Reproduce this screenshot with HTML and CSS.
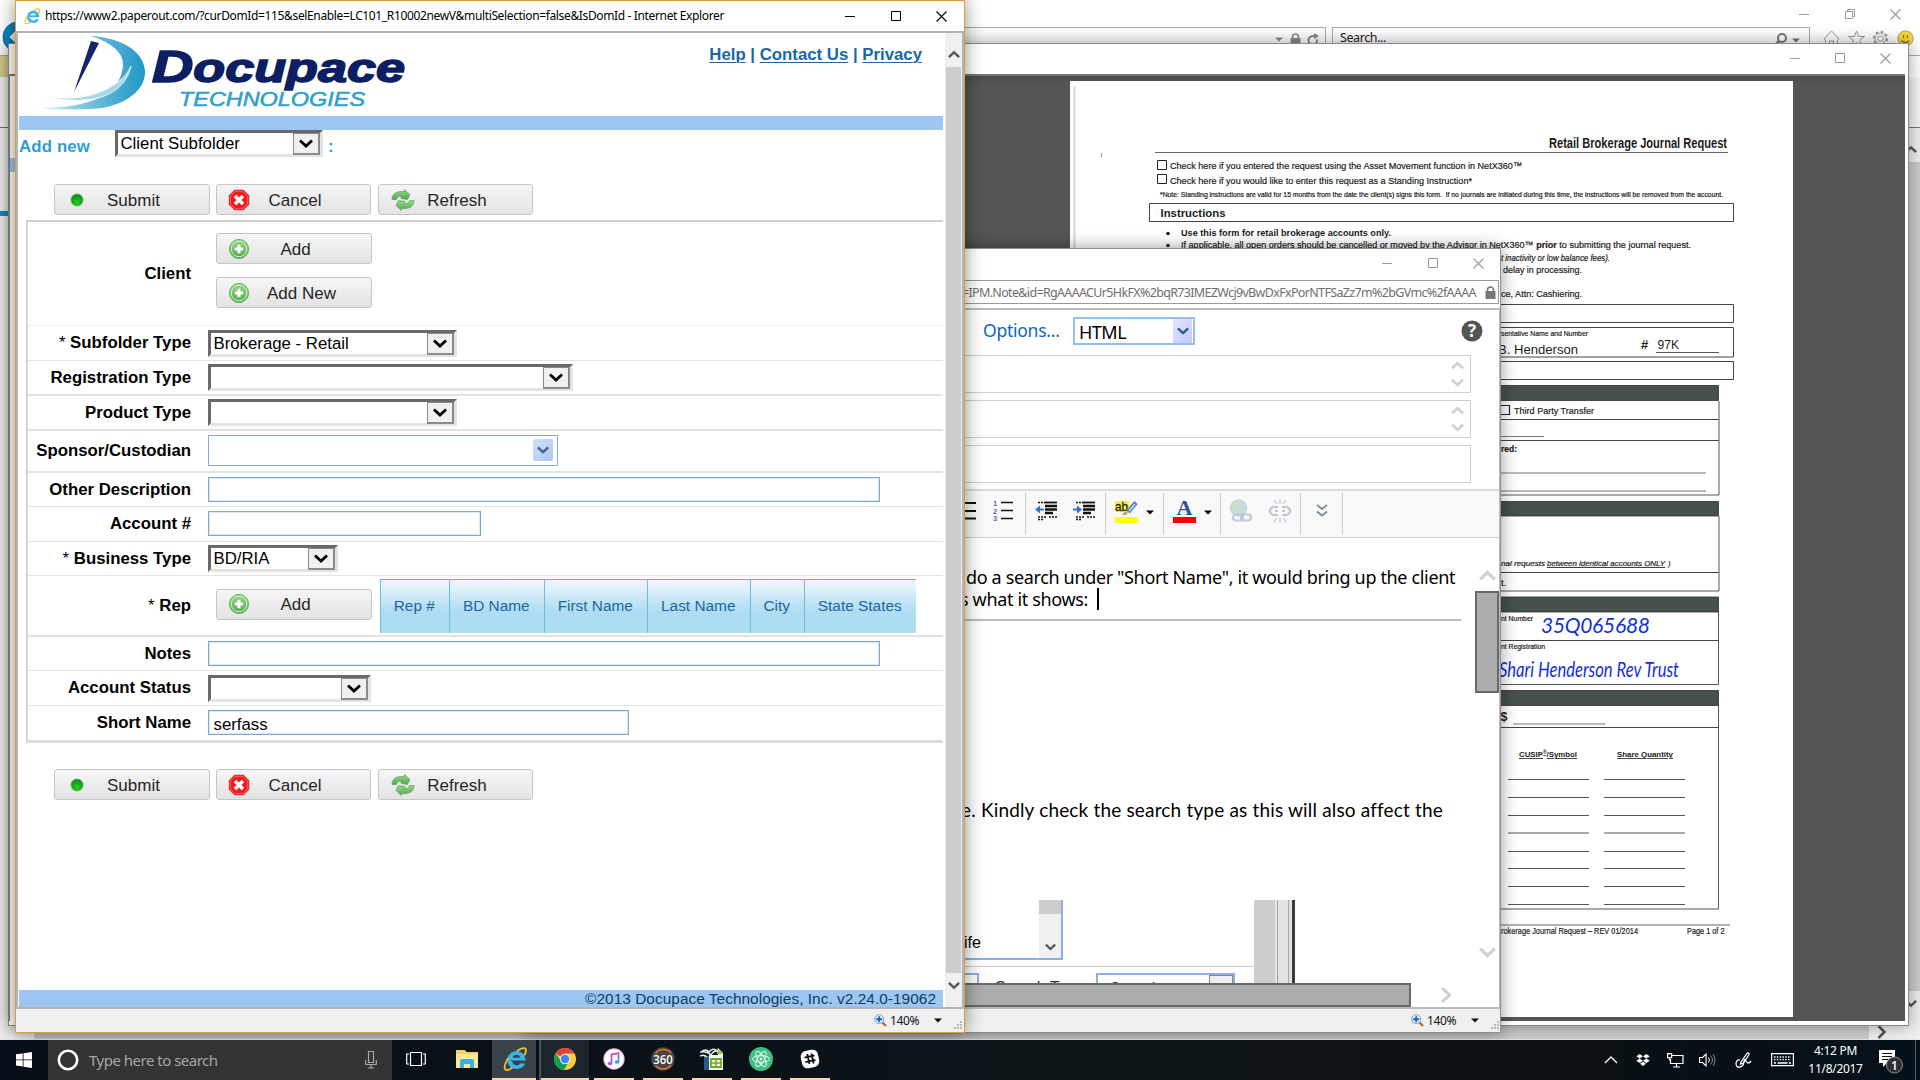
FILE: index.html
```html
<!DOCTYPE html>
<html lang="en">
<head>
<meta charset="utf-8">
<title>Docupace - Add new client subfolder</title>
<link rel="stylesheet" href="styles.css">
</head>
<body>
<svg class="defs" width="0" height="0" aria-hidden="true">
  <defs>
    <linearGradient id="gSwoosh" x1="0" x2="1"><stop offset="0" stop-color="#fff"/><stop offset=".45" stop-color="#7fc4df"/><stop offset="1" stop-color="#1f97c6"/></linearGradient>
    <linearGradient id="gGreen" x1="0" y1="0" x2="0" y2="1"><stop offset="0" stop-color="#9bd88c"/><stop offset="1" stop-color="#4fa84c"/></linearGradient>
    <radialGradient id="gDot" cx=".5" cy=".7" r=".6"><stop offset="0" stop-color="#22d31c"/><stop offset="1" stop-color="#128a22"/></radialGradient>
    <radialGradient id="gTunes" cx=".5" cy=".5" r=".5"><stop offset=".8" stop-color="#fff"/><stop offset="1" stop-color="#e9a8d6"/></radialGradient>
    <linearGradient id="gNote" x1="0" y1="0" x2="1" y2="1"><stop offset="0" stop-color="#f8406a"/><stop offset=".5" stop-color="#b455e0"/><stop offset="1" stop-color="#28a8f0"/></linearGradient>
    <symbol id="min" viewBox="0 0 11 11"><path d="M0 5.5h10" stroke="currentColor" fill="none"/></symbol>
    <symbol id="max" viewBox="0 0 11 11"><path d="M.5 .5h9v9h-9z" stroke="currentColor" fill="none"/></symbol>
    <symbol id="restore" viewBox="0 0 11 11"><path d="M.5 2.5h7v7h-7zM2.5 2.500v-2h7v7h-2" stroke="currentColor" fill="none"/></symbol>
    <symbol id="close" viewBox="0 0 11 11"><path d="M.5 .5l10 10M10.500 .5l-10 10" stroke="currentColor" fill="none" stroke-width="1.1"/></symbol>
    <symbol id="down" viewBox="0 0 14 9"><path d="M1 1.500l6 5.500 6-5.500" stroke="currentColor" stroke-width="2.800" fill="none"/></symbol>
    <symbol id="up" viewBox="0 0 14 9"><path d="M1 7.500l6-5.500 6 5.500" stroke="currentColor" stroke-width="2.800" fill="none"/></symbol>
    <symbol id="caret" viewBox="0 0 8 5"><path d="M0 .5h8l-4 4z" fill="currentColor"/></symbol>
    <symbol id="lock" viewBox="0 0 11 13"><path d="M.5 5h10v8h-10z" fill="currentColor"/><path d="M2.500 6V4a3 3 0 0 1 6 0v2" stroke="currentColor" stroke-width="1.600" fill="none"/></symbol>
    <symbol id="ie" viewBox="0 0 24 24"><path d="M6 13h15.500c.3-5.200-3.300-9-8.500-9-5 0-8.600 3.700-8.600 8.600 0 5 3.600 8.400 8.700 8.400 3.900 0 6.800-2 8-5.200h-4.700c-.7 1.200-1.800 1.800-3.300 1.800-2.300 0-3.900-1.400-4.100-3.600zM9.200 10.200c.4-1.800 1.800-2.800 3.800-2.800s3.300 1 3.600 2.800z" fill="#37b6ee"/><path d="M20.500 8c1.800-3.300 2.200-6 .5-6.700-1.600-.6-4.500.5-7.600 2.700M5.200 10.500C2 15.500.6 20.200 2.500 21.800c1.200.9 3.800.1 6.500-1.800" stroke="#f2c230" stroke-width="1.700" fill="none"/></symbol>
    <symbol id="plus" viewBox="0 0 22 22"><circle cx="11" cy="11" r="9.600" fill="url(#gGreen)" stroke="#6bb765"/><circle cx="11" cy="11" r="7.800" fill="none" stroke="#d8f1d1" stroke-width="1"/><path d="M11 6.800v8.400M6.800 11h8.400" stroke="#fff" stroke-width="3"/></symbol>
    <symbol id="stop" viewBox="0 0 22 22"><path d="M6.500 .8h9l5.700 5.700v9l-5.700 5.700h-9L.8 15.500v-9z" fill="#ee1d23"/><path d="M7.100 2.300h7.800l4.800 4.800v7.800l-4.800 4.800H7.100l-4.800-4.800V7.100z" fill="none" stroke="#ff6e6e" stroke-width=".9"/><path d="M7 7l8 8M15 7l-8 8" stroke="#fff" stroke-width="3.400"/></symbol>
    <symbol id="dot" viewBox="0 0 14 14"><circle cx="7" cy="7" r="6.200" fill="url(#gDot)" stroke="#8fd58f" stroke-width=".7"/></symbol>
    <symbol id="refresh" viewBox="0 0 24 22"><g fill="url(#gGreen)" stroke="#5aa357" stroke-width=".7"><path d="M1 10.500C1 4.500 6 1.600 13.500 2.600V.5L19 5.500l-2.500 5-6.500-1V7.300C8 7.200 6 8 5.500 10.500z"/><path d="M23 11.500c0 6-5 8.900-12.500 7.900v2.100L5 16.500l2.500-5 6.500 1v2.200c2 .1 4-.7 4.500-3.200z"/></g></symbol>
    <symbol id="zoomin" viewBox="0 0 13 13"><path d="M8 8l4 4" stroke="#a8672c" stroke-width="2.200"/><circle cx="5.200" cy="5.200" r="4.500" fill="#e8f3ff" stroke="#8a9bb5"/><path d="M5.200 2.200v6M2.200 5.200h6" stroke="#1463c4" stroke-width="1.900"/></symbol>
    <symbol id="grip" viewBox="0 0 9 9"><path d="M6 0h2v2h-2zM6 3h2v2h-2zM6 6h2v2h-2zM3 3h2v2h-2zM3 6h2v2h-2zM0 6h2v2h-2z" fill="#b8b8b8"/></symbol>
  </defs>
</svg>

<main class="desktop">

  <!-- Main browser window -->
  <section class="win base">
    <div class="base-title">
      <svg class="wbtn"><use href="#min"/></svg><svg class="wbtn"><use href="#restore"/></svg><svg class="wbtn"><use href="#close"/></svg>
    </div>
    <div class="base-nav">
      <svg class="back" viewBox="0 0 32 32"><circle cx="16" cy="16" r="15" fill="#0a84c8" stroke="#0b6ea8"/><path d="M17 9l-7 7 7 7M10 16h14" stroke="#fff" stroke-width="3.500" fill="none"/></svg>
      <div class="addr">
        <svg class="i-caret"><use href="#caret"/></svg><svg class="i-lock"><use href="#lock"/></svg>
        <svg class="i-reload" viewBox="0 0 12 13"><path d="M10 6.500A4.300 4.300 0 1 1 6 3h3" stroke="#888" stroke-width="2" fill="none"/><path d="M7 0l5 3-5 3.300z" fill="#888"/></svg>
      </div>
      <div class="searchbox"><span>Search...</span>
        <svg class="i-mag" viewBox="0 0 13 13"><circle cx="8" cy="5" r="4" stroke="#777" stroke-width="2" fill="none"/><path d="M5 8l-5 5" stroke="#777" stroke-width="2.500"/></svg><svg class="i-caret"><use href="#caret"/></svg></div>
      <div class="base-tools">
        <svg viewBox="0 0 17 17"><path d="M1 9l7.500-8L16 9l-1.500 1v7h-4v-6h-4v6h-4v-7z" fill="none" stroke="#999"/></svg>
        <svg viewBox="0 0 17 17"><path d="M8.500 1l2 5.500h6l-4.800 3.700 2 6.300-5.200-3.800-5.200 3.800 2-6.300L.5 6.500h6z" fill="none" stroke="#999"/></svg>
        <svg viewBox="0 0 17 17"><circle cx="8.500" cy="8.500" r="2.800" fill="none" stroke="#999"/><circle cx="8.500" cy="8.500" r="6.700" fill="none" stroke="#999" stroke-width="2" stroke-dasharray="2.600 2.660"/><circle cx="8.500" cy="8.500" r="5.500" fill="none" stroke="#999"/></svg>
        <svg viewBox="0 0 17 17"><circle cx="8.500" cy="8.500" r="7.600" fill="#fbd83a" stroke="#a39a77"/><path d="M6.500 5v3M10.500 5v3M4.500 10.500q4 4 8 0" stroke="#8a6d1b" stroke-width="1.300" fill="none"/></svg>
      </div>
    </div>
    <div class="base-tab"></div>
    <div class="base-menu"></div>
    <div class="base-body">
      <div class="base-page"></div>
      <div class="vscroll"><svg class="arr"><use href="#up"/></svg><i class="thumb"></i><svg class="arr"><use href="#down"/></svg></div>
    </div>
    <div class="base-h"><i class="thumb"></i><svg class="i-right" viewBox="0 0 9 14"><path d="M1.500 1l6 6-6 6" stroke="#555" stroke-width="2.600" fill="none"/></svg></div>
  </section>

  <!-- Scanned form viewer -->
  <section class="win viewer">
    <div class="viewer-title">
      <svg class="wbtn"><use href="#min"/></svg><svg class="wbtn"><use href="#max"/></svg><svg class="wbtn"><use href="#close"/></svg>
    </div>
    <div class="viewer-body">
      <div class="viewer-side"><i></i></div>
      <div class="viewer-pane">
        <svg class="scan" viewBox="1070 81 723 936" font-family="'Liberation Sans', Arial, sans-serif" fill="#1b1b1b">
          <path d="M1074.500 86v931" stroke="#d3d7d9" stroke-width="2"/>
          <path d="M1101.500 153v4" stroke="#999" stroke-width="1"/>
          <text x="1549" y="148" font-size="14.500" font-weight="700" textLength="178" lengthAdjust="spacingAndGlyphs">Retail Brokerage Journal Request</text>
          <path d="M1155 152.500h573" stroke="#666"/>
          <path d="M1157.500 160.500h9v9h-9zM1157.500 174.500h9v9h-9z" fill="none" stroke="#222"/>
          <g stroke="#1b1b1b" stroke-width=".2">
          <text x="1170" y="169" font-size="9.500" textLength="352" lengthAdjust="spacingAndGlyphs">Check here if you entered the request using the Asset Movement function in NetX360™</text>
          <text x="1170" y="184" font-size="9.500" textLength="302" lengthAdjust="spacingAndGlyphs">Check here if you would like to enter this request as a Standing Instruction*</text>
          <text x="1160" y="197" font-size="6.800" textLength="563" lengthAdjust="spacingAndGlyphs">*Note: Standing instructions are valid for 15 months from the date the client(s) signs this form.&#160; If no journals are initiated during this time, the instructions will be removed from the account.</text>
          </g>
          <path d="M1149.500 203.500h584v18h-584z" fill="none" stroke="#444"/>
          <text x="1160.500" y="216.500" font-size="11.500" font-weight="700" textLength="65" lengthAdjust="spacingAndGlyphs">Instructions</text>
          <circle cx="1168" cy="233.500" r="1.800"/><circle cx="1168" cy="245.500" r="1.800"/>
          <text x="1181" y="236" font-size="9.200" font-weight="700" textLength="210" lengthAdjust="spacingAndGlyphs">Use this form for retail brokerage accounts only.</text>
          <g stroke="#1b1b1b" stroke-width=".2">
          <text x="1181" y="248" font-size="9.200" textLength="510" lengthAdjust="spacingAndGlyphs">If applicable, all open orders should be cancelled or moved by the Advisor in NetX360™ <tspan font-weight="700">prior</tspan> to submitting the journal request.</text>
          <text x="1501" y="260.500" font-size="8.500" font-style="italic" textLength="109" lengthAdjust="spacingAndGlyphs">t inactivity or low balance fees).</text>
          <text x="1503" y="273" font-size="9.300" textLength="79" lengthAdjust="spacingAndGlyphs">delay in processing.</text>
          <text x="1501" y="297" font-size="9.300" textLength="81" lengthAdjust="spacingAndGlyphs">ce, Attn: Cashiering.</text>
          </g>
          <path d="M1480 304.500h253.500v18H1480M1480 327.500h253.500v29.500H1480M1480 361.500h253.500v18H1480" fill="none" stroke="#444"/>
          <text x="1501" y="335.500" font-size="7.200" textLength="87" lengthAdjust="spacingAndGlyphs" stroke="#1b1b1b" stroke-width=".2">sentative Name and Number</text>
          <text x="1498" y="354" font-size="13.500" textLength="80" lengthAdjust="spacingAndGlyphs">B. Henderson</text>
          <text x="1641" y="348.500" font-size="13" font-weight="700">#</text>
          <text x="1657.500" y="348.500" font-size="12" textLength="21.500" lengthAdjust="spacingAndGlyphs">97K</text>
          <path d="M1656 352.500h63" stroke="#555"/>
          <g fill="#47504d" stroke="#2b3130" stroke-width=".8"><path d="M1480 385.500h238.500v15H1480zM1480 501.500h238.500v14.500H1480zM1480 597h238.500v15H1480zM1480 690.500h238.500v15H1480z"/></g>
          <path d="M1719 401v94h-240M1719 516v75h-240M1718.500 612v72.500h-240M1718.500 705v204h-240" fill="none" stroke="#555"/>
          <path d="M1480 419.500h239M1480 440.500h239M1480 572.500h239M1480 640.500h239M1480 727.500h239" stroke="#444"/>
          <path d="M1480 436.500h64M1480 473h226M1480 491h226M1513 724h92" stroke="#777"/>
          <path d="M1500.500 405.500h9v9h-9z" fill="none" stroke="#222" stroke-width="1.200"/>
          <g stroke="#1b1b1b" stroke-width=".2">
          <text x="1514" y="414" font-size="9.300" textLength="80" lengthAdjust="spacingAndGlyphs">Third Party Transfer</text>
          <text x="1501" y="452" font-size="9" font-weight="700" textLength="16" lengthAdjust="spacingAndGlyphs">red:</text>
          <text x="1501" y="566" font-size="7.800" font-style="italic" textLength="44" lengthAdjust="spacingAndGlyphs">nal requests</text>
          <text x="1547" y="566" font-size="7.800" font-style="italic" text-decoration="underline" textLength="118" lengthAdjust="spacingAndGlyphs">between identical accounts ONLY</text>
          <text x="1668" y="566" font-size="7.800" font-style="italic">)</text>
          <text x="1501" y="585.500" font-size="9.500">t.</text>
          <text x="1501" y="621" font-size="7.200" textLength="32" lengthAdjust="spacingAndGlyphs">nt Number</text>
          <text x="1501" y="649" font-size="7.200" textLength="44" lengthAdjust="spacingAndGlyphs">nt Registration</text>
          </g>
          <g fill="#1230d8" font-family="Lato, 'Open Sans', sans-serif">
            <text x="1541" y="633" font-size="21" font-style="italic" textLength="109" lengthAdjust="spacing">35Q065688</text>
            <text x="1499" y="677" font-size="21" font-style="italic" textLength="180" lengthAdjust="spacingAndGlyphs">Shari Henderson Rev Trust</text>
          </g>
          <text x="1500.500" y="720.500" font-size="12.500" font-weight="700">$</text>
          <text x="1519" y="757" font-size="7.800" font-weight="700" text-decoration="underline" textLength="58" lengthAdjust="spacingAndGlyphs">CUSIP<tspan font-size="5" dy="-3">®</tspan><tspan dy="3">/Symbol</tspan></text>
          <text x="1617" y="757" font-size="7.800" font-weight="700" text-decoration="underline" textLength="56" lengthAdjust="spacingAndGlyphs">Share Quantity</text>
          <path d="M1508 779.500h81m15 0h81M1508 797.500h81m15 0h81M1508 815.500h81m15 0h81M1508 833h81m15 0h81M1508 851.500h81m15 0h81M1508 868.500h81m15 0h81M1508 886.500h81m15 0h81M1508 904.500h81m15 0h81" fill="none" stroke="#555"/>
          <path d="M1480 925h250" stroke="#666"/>
          <g stroke="#1b1b1b" stroke-width=".2">
          <text x="1501" y="934" font-size="9" textLength="137" lengthAdjust="spacingAndGlyphs">rokerage Journal Request – REV 01/2014</text>
          <text x="1687" y="934" font-size="9" textLength="37.500" lengthAdjust="spacingAndGlyphs">Page 1 of 2</text>
          </g>
        </svg>
      </div>
    </div>
  </section>

  <!-- Mail compose window -->
  <section class="win mail">
    <div class="mail-title">
      <svg class="wbtn"><use href="#min"/></svg><svg class="wbtn"><use href="#max"/></svg><svg class="wbtn"><use href="#close"/></svg>
    </div>
    <div class="mail-addr"><span>=IPM.Note&amp;id=RgAAAACUr5HkFX%2bqR73IMEZWcj9vBwDxFxPorNTFSaZz7m%2bGVmc%2fAAAA</span><svg class="i-lock"><use href="#lock"/></svg></div>
    <div class="mail-view">
      <div class="mail-options">
        <a class="opt">Options...</a>
        <div class="fmt"><span>HTML</span><i><svg class="i-drop"><use href="#down"/></svg></i></div>
        <svg class="help" viewBox="0 0 22 22"><circle cx="11" cy="11" r="10.500" fill="#555"/><text x="11" y="17" text-anchor="middle" font-size="17" font-weight="700" fill="#fff" font-family="Open Sans, sans-serif">?</text></svg>
      </div>
      <div class="mail-fields">
        <div class="mfield"><svg><use href="#up"/></svg><svg><use href="#down"/></svg></div>
        <div class="mfield"><svg><use href="#up"/></svg><svg><use href="#down"/></svg></div>
        <div class="mfield"></div>
      </div>
      <div class="toolbar">
        <div class="tg g1">
          <svg width="24" height="22" viewBox="0 0 24 22"><path d="M11 3h13M11 11h13M11 18.500h13" stroke="#111" stroke-width="1.800"/></svg>
          <svg width="22" height="22" viewBox="0 0 22 22"><path d="M9 2.500h12M9 10.500h12M9 18.500h12" stroke="#111" stroke-width="1.500"/><text font-size="7.500" font-weight="700" fill="#4a6fb5" font-family="Liberation Sans" x="1" y="6">1<tspan x="1" dy="7.500">2</tspan><tspan x="1" dy="7.500">3</tspan></text></svg>
        </div>
        <div class="tg g2">
          <svg width="23" height="22" viewBox="0 0 23 22"><path d="M9 2.500h13" stroke="#111" stroke-width="1.800"/><path d="M10 6h12M10 9.500h12M10 13h8" stroke="#111" stroke-width="2.400"/><path d="M3 2.500h5M3 17h9M3 19.500h6M14 17h8" stroke="#111" stroke-width="1.500" stroke-dasharray="2 1"/><path d="M0 9.500l5-4v3h4v2H5v3z" fill="#3472c8"/></svg>
          <svg width="23" height="22" viewBox="0 0 23 22"><path d="M9 2.500h13" stroke="#111" stroke-width="1.800"/><path d="M10 6h12M10 9.500h12M10 13h8" stroke="#111" stroke-width="2.400"/><path d="M3 2.500h5M3 17h9M3 19.500h6M14 17h8" stroke="#111" stroke-width="1.500" stroke-dasharray="2 1"/><path d="M9 9.500l-5-4v3H0v2h4v3z" fill="#3472c8"/></svg>
        </div>
        <div class="tg g3">
          <svg width="23" height="23" viewBox="0 0 23 23"><path d="M0 1h14v11H0z" fill="#f5f13a"/><text x="0" y="11" font-size="13" textLength="13" lengthAdjust="spacingAndGlyphs" fill="#222" stroke="#222" stroke-width=".3" font-family="Liberation Sans">ab</text><path d="M21 2.500l-8 9.500" stroke="#5f82b3" stroke-width="4.500"/><path d="M20 4l-6 7" stroke="#c5d6ec" stroke-width="1.600"/><path d="M7 15q3-6 6-2l-2 2z" fill="#c9a24a"/><path d="M0 17h23v6H0z" fill="#ff0"/></svg>
          <svg class="i-caret"><use href="#caret"/></svg>
        </div>
        <div class="tg g3">
          <svg width="23" height="23" viewBox="0 0 23 23"><text x="11.500" y="14.500" text-anchor="middle" font-size="22" font-weight="700" fill="#2f4f96" font-family="Liberation Serif">A</text><path d="M0 17h23v6H0z" fill="#f00"/></svg>
          <svg class="i-caret"><use href="#caret"/></svg>
        </div>
        <div class="tg g4">
          <svg width="24" height="24" viewBox="0 0 24 24" opacity=".6"><circle cx="9.500" cy="9" r="8.200" fill="#a9c4e6" stroke="#9eb0c8"/><path d="M3 6q4-6 8-4l1 4-4 2 1 5-3 2-3-4zM14 6l3 4-3 4z" fill="#a6d3a0"/><rect x="4" y="15.500" width="10" height="6" rx="3" fill="none" stroke="#9aa9c2" stroke-width="2.200"/><rect x="12" y="15.500" width="10" height="6" rx="3" fill="none" stroke="#9aa9c2" stroke-width="2.200"/></svg>
          <svg width="22" height="24" viewBox="0 0 22 24"><path d="M9 8H5a3.500 3.500 0 0 0 0 8h4M13 8h4a3.500 3.500 0 0 1 0 8h-4M6 12h3M13 12h3" fill="none" stroke="#bcc3d1" stroke-width="2.200"/><path d="M11 0v5M5 1l3 4M17 1l-3 4M11 24v-5M5 23l3-4M17 23l-3-4" stroke="#bcc3d1" stroke-width="1.200"/></svg>
        </div>
        <div class="tg g5"><svg width="12" height="13" viewBox="0 0 12 13"><path d="M1 1l5 4 5-4M1 7.500l5 4 5-4" stroke="#7d8aa5" stroke-width="1.800" fill="none"/></svg></div>
      </div>
      <div class="mail-main">
        <div class="mail-text">
          <p class="l1">do a search under "Short Name", it would bring up the client</p>
          <p class="l2">s what it shows: <i class="cursor"></i></p>
          <hr>
          <p class="l3"><span>e. </span>Kindly check the search type as this will also affect the</p>
          <div class="shot">
            <div class="shot-main">
              <div class="shot-list"><span>ife</span><div class="shot-scroll"><i></i><svg><use href="#down"/></svg></div></div>
              <div class="shot-row"><i class="shot-in"></i><span>Search Type</span><b><em>Contains</em><i></i></b></div>
            </div>
            <div class="shot-edge"></div>
          </div>
        </div>
        <div class="mail-scroll"><svg class="arr"><use href="#up"/></svg><i class="thumb"></i><svg class="arr"><use href="#down"/></svg></div>
      </div>
      <div class="mail-h"><i class="thumb"></i><svg viewBox="0 0 12 16"><path d="M2 1l7.500 7L2 15" stroke="#cdcdcd" stroke-width="3" fill="none"/></svg></div>
    </div>
    <div class="status"><svg class="i-zoom"><use href="#zoomin"/></svg><span>140%</span><svg class="i-caret"><use href="#caret"/></svg><svg class="i-grip"><use href="#grip"/></svg></div>
  </section>

  <!-- Docupace dialog -->
  <section class="win docu">
    <div class="docu-title">
      <svg class="fav"><use href="#ie"/></svg><span class="ttl">https://www2.paperout.com/?curDomId=115&amp;selEnable=LC101_R10002newV&amp;multiSelection=false&amp;IsDomId - Internet Explorer</span>
      <svg class="wbtn"><use href="#min"/></svg><svg class="wbtn"><use href="#max"/></svg><svg class="wbtn"><use href="#close"/></svg>
    </div>
    <div class="docu-view">
      <div class="page">
        <header class="head">
          <svg class="logo" width="376" height="78" viewBox="32 34 376 78">
            <path d="M90 36C118 37 144 50 145 71c1 22-26 38-57 38-20 1-40 0-56-1 27 0 47-2 62-8 18-7 29-20 29-36C123 51 108 41 90 36z" fill="url(#gSwoosh)"/>
            <path d="M44 96c22 4 42 2 56-4 14-6 26-14 31-26-4 19-20 32-45 34-16 1-32-1-42-4z" fill="#a9d8ea" stroke="#fff" stroke-width=".8"/>
            <path d="M91 41l8 2-25 49z" fill="#14246b"/>
            <text x="152" y="82" font-family="Liberation Sans" font-size="45" font-weight="700" font-style="italic" fill="#0d1f63" stroke="#0d1f63" stroke-width="1.600" textLength="253" lengthAdjust="spacingAndGlyphs"><tspan>D</tspan><tspan font-size="41">ocupace</tspan></text>
            <text x="179" y="105.500" font-family="Liberation Sans" font-size="19.500" font-style="italic" fill="#2f9fcb" stroke="#2f9fcb" stroke-width=".5" textLength="186" lengthAdjust="spacingAndGlyphs">TECHNOLOGIES</text>
          </svg>
          <nav class="links"><a>Help</a> | <a>Contact Us</a> | <a>Privacy</a></nav>
        </header>
        <div class="bluebar"></div>
        <div class="addnew"><b>Add new</b><div class="sel w208"><span>Client Subfolder</span><i><svg><use href="#down"/></svg></i></div><b>:</b></div>
        <div class="btns">
          <div class="btn"><svg width="14" height="14"><use href="#dot"/></svg><span>Submit</span></div>
          <div class="btn"><svg width="22" height="22"><use href="#stop"/></svg><span>Cancel</span></div>
          <div class="btn"><svg class="rf" width="24" height="22"><use href="#refresh"/></svg><span>Refresh</span></div>
        </div>
        <div class="form">
          <div class="row r-client"><label>Client</label><div class="stack"><div class="btn"><svg width="22" height="22"><use href="#plus"/></svg><span>Add</span></div><div class="btn wide"><svg width="22" height="22"><use href="#plus"/></svg><span>Add New</span></div></div></div>
          <div class="row h35"><label><s>*</s> Subfolder Type</label><div class="sel w249"><span>Brokerage - Retail</span><i><svg><use href="#down"/></svg></i></div></div>
          <div class="row h35 b2"><label>Registration Type</label><div class="sel w365"><span></span><i><svg><use href="#down"/></svg></i></div></div>
          <div class="row h35 b2"><label>Product Type</label><div class="sel w249"><span></span><i><svg><use href="#down"/></svg></i></div></div>
          <div class="row h42 b2"><label>Sponsor/Custodian</label><div class="combo"><i><svg><use href="#down"/></svg></i></div></div>
          <div class="row h34"><label>Other Description</label><div class="inp w672"></div></div>
          <div class="row h35"><label>Account #</label><div class="inp w273"></div></div>
          <div class="row h34"><label><s>*</s> Business Type</label><div class="sel w130"><span>BD/RIA</span><i><svg><use href="#down"/></svg></i></div></div>
          <div class="row r-rep b2"><label><s>*</s> Rep</label><div class="btn"><svg width="22" height="22"><use href="#plus"/></svg><span>Add</span></div>
            <div class="cols"><span>Rep #</span><span>BD Name</span><span>First Name</span><span>Last Name</span><span>City</span><span>State States</span></div></div>
          <div class="row h34"><label>Notes</label><div class="inp w672"></div></div>
          <div class="row h35"><label>Account Status</label><div class="sel w163"><span></span><i><svg><use href="#down"/></svg></i></div></div>
          <div class="row h34 last"><label>Short Name</label><div class="inp w421">serfass</div></div>
        </div>
        <div class="btns bottom">
          <div class="btn"><svg width="14" height="14"><use href="#dot"/></svg><span>Submit</span></div>
          <div class="btn"><svg width="22" height="22"><use href="#stop"/></svg><span>Cancel</span></div>
          <div class="btn"><svg class="rf" width="24" height="22"><use href="#refresh"/></svg><span>Refresh</span></div>
        </div>
        <footer class="foot">©2013 Docupace Technologies, Inc. v2.24.0-19062</footer>
      </div>
      <div class="vscroll"><svg class="arr"><use href="#up"/></svg><i class="thumb"></i><svg class="arr"><use href="#down"/></svg></div>
    </div>
    <div class="status"><svg class="i-zoom"><use href="#zoomin"/></svg><span>140%</span><svg class="i-caret"><use href="#caret"/></svg><svg class="i-grip"><use href="#grip"/></svg></div>
  </section>
</main>

<footer class="taskbar">
  <div class="start"><svg width="16" height="16" viewBox="0 0 16 16"><path d="M0 2.300l6.700-.9v6.100H0zM7.500 1.300L16 0v7.500H7.500zM0 8.300h6.700v6.200L0 13.600zM7.500 8.300H16V16l-8.500-1.200z" fill="#fff"/></svg></div>
  <div class="search">
    <svg width="22" height="22" viewBox="0 0 22 22"><circle cx="11" cy="11" r="9.200" fill="none" stroke="#fff" stroke-width="2.600"/></svg>
    <span>Type here to search</span>
    <svg width="12" height="18" viewBox="0 0 12 18"><path d="M3.500 .5h5v11h-5zM.7 9v4.500h10.600V9M6 13.500v3M3 17h6" fill="none" stroke="#a8a8a8" stroke-width="1.200"/></svg>
  </div>
  <div class="app"><svg width="20" height="16" viewBox="0 0 20 16"><path d="M4.500 1.500h11v13h-11zM3 3H.7v10H3M17 3h2.300v10H17" fill="none" stroke="#fff" stroke-width="1.200"/></svg></div>
  <div class="app folder"><svg width="22" height="19" viewBox="0 0 22 19"><path d="M0 0h9l1.500 2H22v16H0z" fill="#f6cf6a"/><path d="M0 4h22v14H0z" fill="#fde695"/><path d="M4 18v-7q0-2 2-2h10q2 0 2 2v7h-4v-4H8v4z" fill="#35b2e8"/></svg></div>
  <div class="app on"><svg width="25" height="25"><use href="#ie"/></svg></div>
  <div class="app on2"><svg width="22" height="22" viewBox="0 0 22 22"><circle cx="11" cy="11" r="11" fill="#ffcd41"/><path d="M11 11L1.500 5.500A11 11 0 0 1 20.500 5.500H11z" fill="#db4437"/><path d="M1.500 5.500A11 11 0 0 0 10 22l5-8.500-8-.5z" fill="#0f9d58"/><circle cx="11" cy="11" r="5.200" fill="#f1f1f1"/><circle cx="11" cy="11" r="4.200" fill="#4285f4"/></svg></div>
  <div class="app run"><svg width="22" height="22" viewBox="0 0 22 22"><circle cx="11" cy="11" r="10.700" fill="url(#gTunes)"/><path d="M8.500 15V6.500l7-1.500v8.500" fill="none" stroke="url(#gNote)" stroke-width="1.800"/><ellipse cx="7" cy="15.500" rx="2.300" ry="1.800" fill="#a45be0"/><ellipse cx="14" cy="14" rx="2.300" ry="1.800" fill="#3a9cf0"/></svg></div>
  <div class="app run"><svg width="24" height="24" viewBox="0 0 24 24"><circle cx="12" cy="12" r="11.800" fill="#454545"/><path d="M4.500 6.500A10 10 0 0 1 20 6M4.500 18.500A10 10 0 0 0 20 18" stroke="#e8702a" stroke-width="1.600" fill="none"/><text x="12" y="16.500" font-family="Open Sans" font-weight="600" font-size="12.500" fill="#fff" text-anchor="middle" textLength="19.500" lengthAdjust="spacingAndGlyphs">360</text></svg></div>
  <div class="app run"><svg width="24" height="24" viewBox="0 0 24 24"><path d="M4 9h5v14H4z" fill="#2a5b86"/><path d="M9 8h9V1l5 5v17H9z" fill="#f3f6ee"/><path d="M17 1l6 6h-6z" fill="#8cc63e"/><path d="M11 12h10v8H11z" fill="#f3f6ee" stroke="#69ad1f" stroke-width="1.800"/><path d="M16 12v8M11 16h10" stroke="#69ad1f" stroke-width="1.500"/><path d="M1 5q5-4 8 0 4-5 8-1-4 0-6 4-4-4-10-3zM0 9q4-2 7 1" fill="none" stroke="#e6edf2" stroke-width="1.500"/></svg></div>
  <div class="app run"><svg width="24" height="24" viewBox="0 0 24 24"><circle cx="12" cy="12" r="12" fill="#3fbf84"/><g fill="none" stroke="#e9fff4" stroke-width="1"><ellipse cx="12" cy="12" rx="8.500" ry="3.300"/><ellipse cx="12" cy="12" rx="8.500" ry="3.300" transform="rotate(60 12 12)"/><ellipse cx="12" cy="12" rx="8.500" ry="3.300" transform="rotate(120 12 12)"/></g><circle cx="12" cy="12" r="1.300" fill="#fff"/></svg></div>
  <div class="app run"><svg width="20" height="20" viewBox="0 0 20 20"><rect x="2" y="2" width="16" height="16" rx="5" fill="#fff" transform="rotate(-12 10 10)" stroke="#fff" stroke-width="1.500"/><path d="M7.200 5l2.300 10M11.400 4.500l2.300 10M4.500 8.600l10-2.300M5.400 13.100l10-2.300" stroke="#111" stroke-width="1.800"/></svg></div>
  <div class="tray">
    <svg width="14" height="8" viewBox="0 0 14 8"><path d="M1 7l6-6 6 6" stroke="#fff" stroke-width="1.300" fill="none"/></svg>
    <svg width="14" height="13" viewBox="0 0 14 13"><path d="M3.700 0L7 2.200 3.700 4.400.3 2.200zM10.300 0l3.400 2.200-3.400 2.200L7 2.200zM3.700 4.600L7 6.800 3.700 9 .3 6.800zM10.300 4.600l3.400 2.200L10.300 9 7 6.800zM7 7.700l3 2-3 2.300-3-2.300z" fill="#fff"/></svg>
    <svg width="17" height="15" viewBox="0 0 17 15"><path d="M5 2.500h11v8H3.500V6M9.500 10.500v3M6 14h7M.6 .6h4v4h-4zM2.500 4.500v3" fill="none" stroke="#fff" stroke-width="1.200"/></svg>
    <svg width="17" height="14" viewBox="0 0 17 14"><path d="M.6 4.500h3l3.500-3.500v12L3.600 9.500h-3z" fill="none" stroke="#fff" stroke-width="1.100"/><path d="M9.500 4.500q2 2.500 0 5" stroke="#fff" fill="none"/><path d="M11.500 2.500q4 4.500 0 9M14 1q4 6 0 12" stroke="#888" fill="none"/></svg>
    <svg width="17" height="16" viewBox="0 0 17 16"><path d="M6 10L12 1.500q2-1.500 2 1L8.500 11 5.500 12zM1 11q1-4 4-3M1 11q0 5 4 4 4-1 4-6 1-3 2 0 2 4 5 0" fill="none" stroke="#fff" stroke-width="1.300"/></svg>
    <svg width="23" height="14" viewBox="0 0 23 14"><path d="M.6 .6h21.800v12H.6z" fill="none" stroke="#fff" stroke-width="1.200"/><path d="M3 4h17M3 6.700h17" stroke="#fff" stroke-width="1.300" stroke-dasharray="1.500 1.300"/><path d="M3 10h2M6.500 10h10M18 10h2" stroke="#fff" stroke-width="1.300"/></svg>
    <div class="clock"><span>4:12 PM</span><span>11/8/2017</span></div>
    <svg class="note" width="26" height="25" viewBox="0 0 26 25"><path d="M0 0h16v13H8l-4 4v-4H0z" fill="#fff"/><path d="M3 3.500h10M3 6.500h10M3 9.500h6" stroke="#111" stroke-width="1.100"/><circle cx="15.500" cy="15" r="8" fill="#2b3034" stroke="#8a8d8f"/><text x="15.500" y="19.500" font-family="Open Sans" font-weight="600" font-size="12" fill="#fff" text-anchor="middle">1</text></svg>
    <i class="peek"></i>
  </div>
</footer>
</body>
</html>
```

FILE: styles.css
```css
* { box-sizing: border-box; }
body { margin: 0; width: 1920px; height: 1080px; overflow: hidden; background: #fff; font-family: "Liberation Sans", Arial, sans-serif; color: #000; }
p { margin: 0; }
i, em { font-style: normal; }
svg { display: block; flex: none; }
.defs { position: absolute; }
.desktop { position: relative; height: 1040px; overflow: hidden; background: #fff; }
.win { position: absolute; display: flex; flex-direction: column; }
.wbtn { width: 11px; height: 11px; }
.i-caret { width: 8px; height: 5px; }
.i-lock { width: 11px; height: 13px; }

/* main browser */
.base { left: 0; top: 0; width: 1920px; height: 1040px; background: #fff; color: #888; }
.base-title { height: 27px; display: flex; justify-content: flex-end; align-items: center; gap: 34.500px; padding: 2px 19px 0 0; color: #999; }
.base-nav { height: 28px; display: flex; align-items: flex-start; }
.back { width: 32px; height: 32px; margin: -6px 8px 0 2px; }
.addr { flex: none; width: 1284px; height: 28px; border: 1px solid #aaa; display: flex; justify-content: flex-end; align-items: flex-start; gap: 7px; padding: 5px 6px 0 0; }
.addr .i-caret { margin-top: 4px; }
.i-reload { width: 12px; height: 13px; margin-left: -1px; }
.searchbox { width: 478px; height: 28px; margin-left: 6px; border: 1px solid #aaa; display: flex; align-items: flex-start; padding: 5px 9px 0 7px; color: #222; font: 12.500px/14px "Noto Sans", sans-serif; letter-spacing: -.4px; }
.searchbox span { flex: 1; margin-top: -2px; }
.searchbox svg { color: #777; }
.i-mag { width: 13px; height: 13px; margin-right: 5px; }
.searchbox .i-caret { margin-top: 5px; }
.base-tools { display: flex; gap: 7.500px; padding: 3px 0 0 13px; }
.base-tools svg { width: 17px; height: 17px; }
.base-tab { height: 22px; background: linear-gradient(90deg, #d9d18e 9px, #fff 9px); border-top: 1px solid #aaa; }
.base-menu { height: 51px; background: #f5f5f5; border-bottom: 1px solid #777; }
.base-body { flex: 1; display: flex; }
.base-page { flex: 1; background: linear-gradient(#f4f4f4 0 83px, #1a8fb8 83px 88px, #f4f4f4 88px); }
.vscroll { width: 16px; background: #f0f0f0; display: flex; flex-direction: column; align-items: center; }
.vscroll .arr { width: 12px; height: 34px; color: #555; padding-top: 9px; }
.vscroll .arr:last-child { padding: 0 0 9px; }
.vscroll .thumb { flex: 1; width: 15px; background: #cdcdcd; }
.base .vscroll .arr { margin-left: -2px; }
.base-h { height: 15px; display: flex; background: #f0f0f0; padding-left: 34px; border-bottom: 1px solid #e8e8e8; }
.base-h .thumb { width: 1835px; background: #cdcdcd; }
.i-right { width: 9px; height: 14px; margin: 0 0 0 8px; }

/* scanned form viewer */
.viewer { left: 8px; top: 43px; width: 1901px; height: 983px; background: #fff; border: 1px solid #8a8a8a; box-shadow: 0 0 16px rgba(0,0,0,.38); }
.viewer-title { height: 30px; display: flex; justify-content: flex-end; gap: 34px; padding: 9px 17px 0 0; color: #999; }
.viewer-body { flex: 1; display: flex; border-top: 2px solid #777; border-left: 1px solid #777; margin-bottom: 4px; margin-right: 3px; }
.viewer-side { width: 20px; padding-top: 82px; }
.viewer-side i { display: block; height: 14px; background: #9dc7f1; }
.viewer-pane { flex: 1; background: linear-gradient(#4a4a4a, #555 8px); padding: 5px 0 0 1040px; }
.scan { width: 723px; height: 936px; background: #fff; }

/* mail window */
.mail { left: 525px; top: 248px; width: 976px; height: 785px; background: #fff; border: 1px solid #8f8f8f; box-shadow: 0 0 16px rgba(0,0,0,.4); }
.mail-title { height: 31px; display: flex; justify-content: flex-end; gap: 34.500px; padding: 9px 16px 0 0; color: #999; }
.mail-addr { height: 24px; border: 1px solid #999; display: flex; align-items: center; justify-content: flex-end; color: #6e6e6e; font: 12.500px/20px "Noto Sans", sans-serif; letter-spacing: -.66px; padding-right: 2px; margin-right: 1px; gap: 6px; white-space: nowrap; }
.mail-addr span { width: 517px; overflow: hidden; padding-top: 2px; }
.mail-addr .i-lock { color: #777; }
.mail-view { flex: 1; margin: 4px 0 0 0; border: 2px solid #bbb; border-left: 0; border-right-width: 1px; display: flex; flex-direction: column; height: 700px; }
.mail-options { height: 45px; display: flex; align-items: flex-start; padding: 7px 16px 0 457px; }
.opt { width: 90px; color: #0a66c8; font: 17.500px/26px "Noto Sans", sans-serif; letter-spacing: -.25px; }
.fmt { width: 122px; height: 28px; border: 2px solid #8fc0ee; display: flex; justify-content: space-between; font: 18px/26px "Noto Sans", sans-serif; letter-spacing: -.5px; padding-left: 4px; background: #fff; }
.fmt i { width: 19px; height: 24px; margin-right: 1px; background: linear-gradient(135deg, #e4e6ff, #c4c8fa); display: flex; align-items: center; justify-content: center; color: #2c5a9c; }
.i-drop { width: 12px; height: 8px; }
.help { width: 22px; height: 22px; margin: 3px 0 0 auto; }
.mail-fields { display: flex; flex-direction: column; gap: 7px; padding-right: 28px; height: 134px; }
.mfield { height: 38px; border: 1px solid #cfcfcf; border-left: 0; display: flex; flex-direction: column; align-items: flex-end; justify-content: center; gap: 8px; padding-right: 6px; color: #cfcfcf; }
.mfield svg { width: 13px; height: 9px; }
.toolbar { height: 49px; background: #f9f9f9; border-top: 2px solid #dadada; border-bottom: 1px solid #cfcfcf; display: flex; justify-content: flex-end; padding: 2px 156px 3px 0; }
.tg { border-right: 1px solid #ccc; display: flex; align-items: flex-start; padding-top: 7px; }
.g1 { gap: 16px; padding-right: 11px; }
.g2 { width: 80px; padding-left: 9px; gap: 15px; }
.g3 { width: 57.500px; padding-left: 9px; gap: 8px; }
.g3 .i-caret { margin-top: 10px; }
.g4 { width: 80px; padding-left: 8px; padding-top: 6px; gap: 16px; }
.g5 { width: 42px; padding: 11px 0 0 15px; }
.mail-main { flex: 1; display: flex; overflow: hidden; }
.mail-text { width: 949px; padding-left: 438px; white-space: nowrap; }
.l1, .l2 { font: 18px/22px "Noto Sans", sans-serif; letter-spacing: -.35px; padding-left: 2px; }
.l1 { padding-top: 28px; }
.l2 { padding-left: 0; margin-left: -4px; display: flex; gap: 9px; }
.cursor { width: 2px; height: 22px; background: #000; }
.mail-text hr { border: 0; border-top: 2px solid #bdbdbd; margin: 9px 14px 0 0; }
.l3 { font: 19px/24px Lato, sans-serif; letter-spacing: .17px; padding: 177px 0 78px 0; }
.l3 span { margin-left: -3px; }
.shot { height: 85px; display: flex; overflow: hidden; }
.shot-main { width: 290px; }
.shot-list { width: 99px; height: 60px; border: solid #8eb0dd; border-width: 0 2px 2px 0; display: flex; justify-content: space-between; font-size: 16px; }
.shot-list span { padding-top: 34px; }
.shot-scroll { width: 22px; background: #f0f0f0; display: flex; flex-direction: column; align-items: center; }
.shot-scroll i { width: 100%; height: 14px; background: #cdcdcd; margin-bottom: 29px; }
.shot-scroll svg { width: 11px; height: 8px; color: #555; }
.shot-row { border-top: 1px solid #ccc; margin-top: 6px; display: flex; font-size: 16px; padding-top: 6px; }
.shot-in { width: 15px; height: 20px; border: 2px solid #8eb0dd; border-left: 0; }
.shot-row span { width: 117px; padding: 6px 0 0 16px; color: #333; }
.shot-row b { width: 139px; height: 24px; border: 2px solid #8eb0dd; display: flex; justify-content: space-between; font-weight: 400; }
.shot-row b i { width: 24px; background: #eee; border: 1px solid #888; }
.shot-row em { padding: 5px 0 0 11px; color: #333; }
.shot-edge { width: 41px; background: linear-gradient(90deg, #cdcdcd 21px, #e6e6e6 21px 23px, #9aa4ad 23px 24px, #e2e2e2 24px 34px, #aaa 34px 35px, #e2e2e2 35px 38px, #3c3c3c 38px); }
.mail-scroll { width: 24px; display: flex; flex-direction: column; color: #d2d2d2; align-items: center; padding-top: 29px; padding-bottom: 22px; }
.mail-scroll .arr { width: 17px; height: 17px; }
.mail-scroll .thumb { width: 24px; height: 102px; margin: 7px 0 auto; border: 2px solid #696969; background: #adadad; }
.mail-h { height: 24px; display: flex; align-items: center; }
.mail-h .thumb { width: 885px; height: 24px; background: #adadad; border: 2px solid #696969; }
.mail-h svg { width: 12px; height: 16px; margin-left: 29px; }
.status { height: 23px; background: #f0f0f0; display: flex; align-items: center; justify-content: flex-end; font: 12px/20px "Noto Sans", sans-serif; letter-spacing: -.4px; color: #111; flex: none; }
.status span { width: 28px; margin: 0 16px 0 3px; }
.mail .status .i-grip { margin-right: 0; }
.i-zoom { width: 13px; height: 13px; }
.i-grip { width: 9px; height: 9px; margin: 10px 1px 0 12px; }

/* Docupace dialog */
.docu { left: 15px; top: 0; width: 950px; height: 1033px; background: #fff; border: 1px solid #e09b3d; box-shadow: 0 0 18px rgba(0,0,0,.45); }
.docu-title { height: 30px; display: flex; align-items: center; padding: 0 17px 0 8px; font: 12px/20px "Noto Sans", sans-serif; letter-spacing: -.36px; }
.fav { width: 17px; height: 17px; margin-right: 4px; }
.ttl { flex: 1; white-space: nowrap; }
.docu-title .wbtn + .wbtn { margin-left: 34.500px; }
.docu-view { height: 978px; border: 2px solid #b4b4b4; border-left-width: 2px; display: flex; background: #fff; }
.docu-view .vscroll { width: 17px; margin: 0 0 0 2px; }
.page { width: 926px; padding-left: 1px; display: flex; flex-direction: column; }
.head { height: 83px; display: flex; justify-content: space-between; padding: 1px 21px 0 13px; }
.links { font-weight: 700; font-size: 16.800px; line-height: 20px; color: #1c66a5; padding-top: 11px; white-space: nowrap; }
.links a { text-decoration: underline; text-underline-offset: 2px; text-decoration-thickness: 1px; }
.bluebar { height: 14px; background: #9dc7f1; }
.addnew { height: 54px; display: flex; align-items: flex-start; font-size: 16.800px; color: #2f9fc9; }
.addnew b { line-height: 19px; padding-top: 6.500px; }
.addnew b:first-child { width: 96px; letter-spacing: .15px; }
.addnew b:last-child { padding-left: 5px; }
.sel { height: 27px; border: 3px solid; border-color: #696969 #e3e3e3 #e3e3e3 #696969; display: flex; background: #fff; color: #000; font-size: 16.800px; line-height: 22px; padding-left: 2.500px; }
.sel span { flex: 1; white-space: nowrap; }
.sel i { width: 27px; height: 22px; background: #f0f0f0; border: 1px solid #8a8a8a; border-width: 1px 2px 2px 1px; display: flex; align-items: center; justify-content: center; }
.sel svg { width: 14px; height: 9px; }
.w208 { width: 208px; } .w249 { width: 249px; } .w365 { width: 365px; } .w130 { width: 130px; } .w163 { width: 163px; }
.btns { display: flex; gap: 6px; padding-left: 35px; height: 36px; }
.btn { width: 156px; height: 31px; flex: none; border: 1px solid #c6c6c6; border-radius: 3px; background: linear-gradient(#f6f6f6, #e3e3e3); display: grid; grid-template-columns: 43px 1fr 40px; align-items: center; justify-items: center; font-size: 17px; color: #262626; }
.btns .btn + .btn { width: 155px; }
.btns .btn:last-child { margin-left: 1px; }
.btn .rf { margin-left: 5px; }
.btn.wide span { padding-left: 7px; }
.btn span { white-space: nowrap; padding-top: 2px; }
.form { margin-left: 7px; border-left: 2px solid #d4d4d4; border-top: 2px solid #d0d0d0; border-bottom: 3px solid #dcdcdc; }
.row { display: flex; align-items: center; border-bottom: 1px solid #e2e2e2; }
.row label { width: 163px; margin-right: 17px; text-align: right; font-weight: 700; font-size: 16.800px; line-height: 20px; white-space: nowrap; }
.row label s { text-decoration: none; font-weight: 400; }
.r-client { height: 104px; border-bottom-color: #eee; }
.stack { display: flex; flex-direction: column; gap: 13px; padding: 0 0 6px 8px; }
.h34 { height: 34px; } .h35 { height: 35px; } .h42 { height: 42px; }
.b2 { border-bottom-width: 2px; }
.last { border-bottom: 0; }
.inp { height: 25px; border: 1px solid #7ea6db; box-shadow: inset 0 0 0 1px #dbe7f6; font-size: 16.800px; line-height: 28px; padding-left: 4.500px; }
.h35 .inp, .last .inp { margin-top: -1px; }
.w672 { width: 672px; } .w273 { width: 273px; } .w421 { width: 421px; }
.combo { width: 350px; height: 31px; margin-top: -1px; border: 1px solid #8aa9cf; display: flex; justify-content: flex-end; padding: 3px 4px 0 0; }
.combo i { width: 20px; height: 22px; border-radius: 2px; background: linear-gradient(135deg, #cfe0fb, #adc6f5); display: flex; align-items: center; justify-content: center; color: #4a5f8c; }
.combo svg { width: 12px; height: 8px; }
.r-rep { height: 61px; }
.r-rep .btn { margin: -3px 8px 0; }
.cols { display: grid; grid-template-columns: 69px 95px 103px 103px 54px 112px; height: 54px; border-top: 1px solid #5fb5dc; background: linear-gradient(#f0f9fd, #aedcf2 60%); }
.cols span { border-left: 1px solid #6dbde0; font-size: 15.400px; line-height: 52px; text-align: center; color: #1c66a5; white-space: nowrap; padding-right: 1.500px; }
.bottom { padding-top: 26px; height: 57px; }
.foot { margin-top: auto; height: 17px; background: #9dc7f1; color: #0f3a66; font-size: 15.400px; line-height: 17px; letter-spacing: .04px; text-align: right; padding-right: 7px; }

/* taskbar */
.taskbar { height: 40px; display: flex; align-items: stretch; background: linear-gradient(90deg, #060f17, #0d1418 60%, #0b1013 80%, #05111a); color: #fff; }
.start { width: 48px; display: flex; align-items: center; justify-content: center; }
.search { width: 344px; background: #333; display: flex; align-items: center; padding: 0 15px 0 9px; font: 15px/20px "Noto Sans", sans-serif; letter-spacing: -.5px; color: #a6a6a6; }
.search span { flex: 1; padding: 0 0 0 10px; }
.app { width: 49px; display: flex; align-items: center; justify-content: center; border-bottom: 2px solid transparent; padding-right: 1px; }
.folder { width: 51px; padding: 0; }
.on { width: 44px; background: #3a4349; border-bottom-color: #fbd6a8; margin-right: 5px; padding-left: 4px; }
.on2 { width: 48px; background: #1b252b; border-bottom-color: #fbd6a8; box-shadow: -2px 0 0 #4a5359; margin-right: 5px; }
.run { width: 40px; margin-right: 9px; border-bottom-color: #fbd6a8; padding: 0; }
.tray { margin-left: auto; display: flex; align-items: center; }
.tray svg:nth-child(1) { margin-right: 18px; }
.tray svg:nth-child(2) { margin-right: 17px; }
.tray svg:nth-child(3) { margin-right: 15px; }
.tray svg:nth-child(4) { margin-right: 19px; }
.tray svg:nth-child(5) { margin-right: 19px; }
.clock { width: 83px; display: flex; flex-direction: column; align-items: center; font: 12px/18px "Noto Sans", sans-serif; letter-spacing: -.3px; }
.note { margin-left: 2px; margin-top: 5px; }
.peek { width: 1px; height: 40px; background: #5a5f62; margin: 0 4px 0 10px; }
```
